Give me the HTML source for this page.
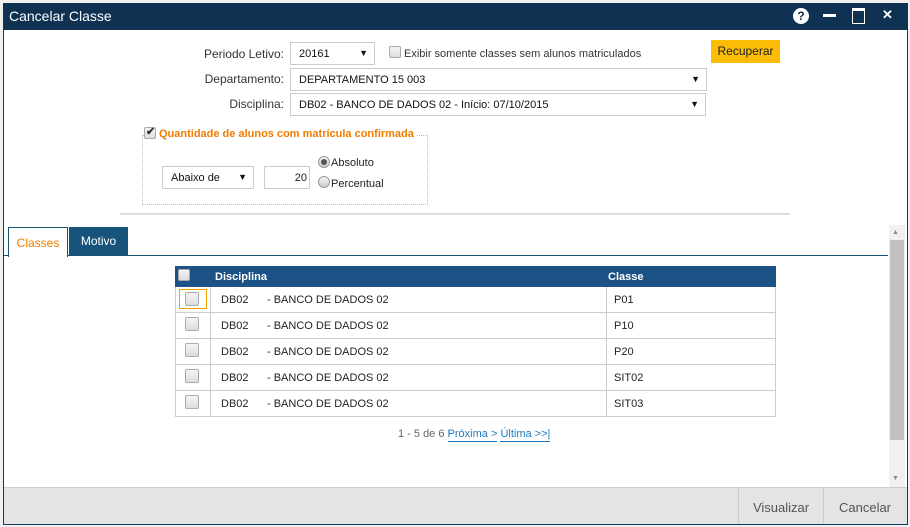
<!DOCTYPE html>
<html><head><meta charset="utf-8"><style>
*{box-sizing:border-box;margin:0;padding:0}
body{width:910px;height:527px;background:#f0f0f0;font-family:"Liberation Sans",sans-serif;font-size:11px;color:#222;position:relative;overflow:hidden}
.a{position:absolute}
.win{left:3px;top:3px;width:905px;height:522px;background:#fff;border:1px solid #0f3a64}
.title{left:3px;top:3px;width:905px;height:27px;background:#0f3253;color:#fff;font-size:14px;padding:5px 0 0 6px}
.lbl{text-align:right;font-size:12px;color:#333}
.sel{border:1px solid #ccc;background:#fff;font-size:11px;padding:5px 0 0 8px;color:#111}
.sel:after{content:"\25BC";position:absolute;right:6px;top:5px;font-size:9px}
.cb{width:12px;height:12px;border:1px solid #aaa;border-radius:2px;background:linear-gradient(#f4f4f4,#ddd)}
.row{left:175px;width:601px;height:26px;border:1px solid #ccc;border-top:none;background:#fff}
.row .c1{position:absolute;left:34px;top:0;height:25px;border-left:1px solid #ccc}
.row .c2{position:absolute;left:430px;top:0;height:25px;border-left:1px solid #ccc}
.row span{position:absolute;top:7px;font-size:11px}
.rb{width:12px;height:12px;border:1px solid #999;border-radius:50%;background:linear-gradient(#f4f4f4,#ccc)}
</style></head><body>
<div class="a win"></div>
<div class="a title">Cancelar Classe</div>
<div class="a" style="left:793px;top:8px;width:16px;height:16px;border-radius:50%;background:#fff;color:#0f3253;font-weight:bold;font-size:12px;text-align:center;line-height:16px">?</div>
<div class="a" style="left:823px;top:14px;width:13px;height:3px;background:#fff"></div>
<div class="a" style="left:852px;top:8px;width:13px;height:16px;border:1px solid #fff;border-top-width:3px"></div>
<div class="a" style="left:882px;top:7px;color:#fff;font-weight:bold;font-size:13px">✕</div>

<div class="a lbl" style="left:150px;top:47px;width:134px">Periodo Letivo:</div>
<div class="a sel" style="left:290px;top:42px;width:85px;height:23px">20161</div>
<div class="a cb" style="left:389px;top:46px"></div>
<div class="a" style="left:404px;top:48px;font-size:11px;color:#333">Exibir somente classes sem alunos matriculados</div>
<div class="a" style="left:711px;top:40px;width:69px;height:23px;background:#fcbd07;font-size:12px;text-align:center;line-height:23px;color:#222">Recuperar</div>

<div class="a lbl" style="left:150px;top:72px;width:134px">Departamento:</div>
<div class="a sel" style="left:290px;top:68px;width:417px;height:23px">DEPARTAMENTO 15 003</div>
<div class="a lbl" style="left:150px;top:97px;width:134px">Disciplina:</div>
<div class="a sel" style="left:290px;top:93px;width:416px;height:23px">DB02 - BANCO DE DADOS 02 - Início: 07/10/2015</div>

<div class="a" style="left:142px;top:135px;width:286px;height:70px;border:1px dotted #bbb"></div>
<div class="a" style="left:144px;top:127px;background:#fff;padding-right:3px;color:#f07c00;font-size:11px;font-weight:bold"><span class="cb" style="display:inline-block;vertical-align:-2px;margin-right:3px;position:relative"><span style="position:absolute;left:1px;top:-3px;color:#333;font-size:11px">✔</span></span>Quantidade de alunos com matrícula confirmada</div>
<div class="a sel" style="left:162px;top:166px;width:92px;height:23px">Abaixo de</div>
<div class="a" style="left:264px;top:166px;width:46px;height:23px;border:1px solid #ccc;text-align:right;padding:5px 2px 0 0">20</div>
<div class="a rb" style="left:318px;top:156px"><div style="margin:2px;width:6px;height:6px;border-radius:50%;background:#555"></div></div>
<div class="a" style="left:331px;top:157px">Absoluto</div>
<div class="a rb" style="left:318px;top:176px"></div>
<div class="a" style="left:331px;top:178px">Percentual</div>

<div class="a" style="left:120px;top:213px;width:670px;height:2px;background:#ddd"></div>

<div class="a" style="left:8px;top:227px;width:60px;height:30px;background:#fff;border:1px solid #1a5276;border-bottom:none;color:#f07c00;font-size:12px;text-align:center;line-height:30px;z-index:2">Classes</div>
<div class="a" style="left:69px;top:227px;width:59px;height:29px;background:#17537a;color:#fff;font-size:12px;text-align:center;line-height:29px">Motivo</div>
<div class="a" style="left:4px;top:255px;width:884px;height:1px;background:#1a5276"></div>

<div class="a" style="left:889px;top:225px;width:16px;height:262px;background:#f0f0f0"></div>
<div class="a" style="left:892px;top:229px;font-size:7px;color:#888">▲</div>
<div class="a" style="left:890px;top:240px;width:14px;height:200px;background:#c1c1c1"></div>
<div class="a" style="left:892px;top:475px;font-size:7px;color:#888">▼</div>

<div class="a" style="left:175px;top:266px;width:601px;height:21px;background:#1d5286;color:#fff;font-size:11px;font-weight:bold"><span class="cb a" style="left:3px;top:3px"></span><span class="a" style="left:40px;top:5px">Disciplina</span><span class="a" style="left:433px;top:5px">Classe</span></div>
<div class="a row" style="top:287px"><div class="cb a" style="left:9px;top:5px;width:14px;height:14px"></div><div class="a" style="left:3px;top:2px;width:28px;height:20px;border:1px solid #f5a000"></div><div class="c1"></div><span style="left:45px">DB02</span><span style="left:91px">- BANCO DE DADOS 02</span><div class="c2"></div><span style="left:438px">P01</span></div>
<div class="a row" style="top:313px"><div class="cb a" style="left:9px;top:4px;width:14px;height:14px"></div><div class="c1"></div><span style="left:45px">DB02</span><span style="left:91px">- BANCO DE DADOS 02</span><div class="c2"></div><span style="left:438px">P10</span></div>
<div class="a row" style="top:339px"><div class="cb a" style="left:9px;top:4px;width:14px;height:14px"></div><div class="c1"></div><span style="left:45px">DB02</span><span style="left:91px">- BANCO DE DADOS 02</span><div class="c2"></div><span style="left:438px">P20</span></div>
<div class="a row" style="top:365px"><div class="cb a" style="left:9px;top:4px;width:14px;height:14px"></div><div class="c1"></div><span style="left:45px">DB02</span><span style="left:91px">- BANCO DE DADOS 02</span><div class="c2"></div><span style="left:438px">SIT02</span></div>
<div class="a row" style="top:391px"><div class="cb a" style="left:9px;top:4px;width:14px;height:14px"></div><div class="c1"></div><span style="left:45px">DB02</span><span style="left:91px">- BANCO DE DADOS 02</span><div class="c2"></div><span style="left:438px">SIT03</span></div>

<div class="a" style="left:398px;top:428px;color:#666">1 - 5 de 6 <span style="color:#1a7bbf;border-bottom:1px solid #1a7bbf;padding-bottom:1px">Próxima &gt;</span> <span style="color:#1a7bbf;border-bottom:1px solid #1a7bbf;padding-bottom:1px">Última &gt;&gt;|</span></div>

<div class="a" style="left:4px;top:487px;width:903px;height:37px;background:#e4e4e4;border-top:1px solid #ccc"></div>
<div class="a" style="left:738px;top:488px;width:1px;height:36px;background:#ccc"></div>
<div class="a" style="left:823px;top:488px;width:1px;height:36px;background:#ccc"></div>
<div class="a" style="left:739px;top:500px;width:84px;text-align:center;font-size:13px;color:#555">Visualizar</div>
<div class="a" style="left:824px;top:500px;width:82px;text-align:center;font-size:13px;color:#555">Cancelar</div>
</body></html>
